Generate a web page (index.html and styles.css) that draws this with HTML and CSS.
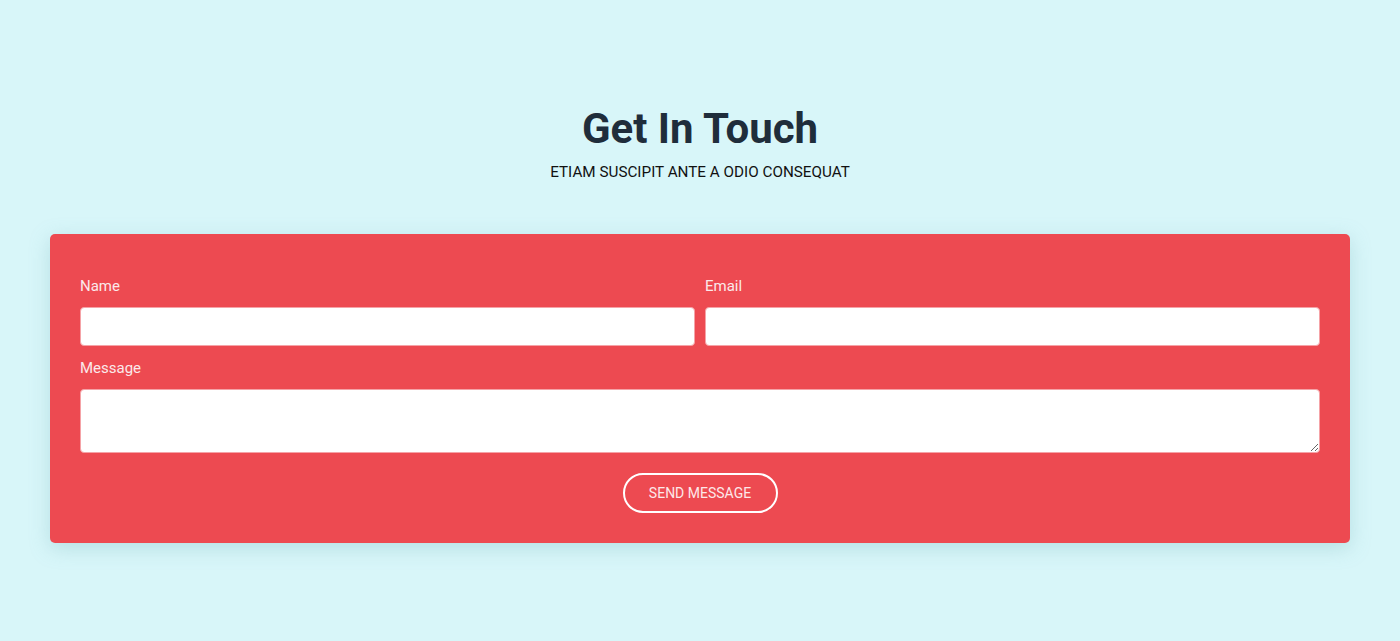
FILE: index.html
```html
<!DOCTYPE html>
<html lang="en">
<head>
<meta charset="utf-8">
<title>Get In Touch</title>
<link rel="stylesheet" href="styles.css">
</head>
<body>
<section class="contact">
  <header class="contact-head">
    <h1 class="title">Get In Touch</h1>
    <p class="subtitle">ETIAM SUSCIPIT ANTE A ODIO CONSEQUAT</p>
  </header>
  <form class="card">
    <div class="row">
      <div class="field">
        <label class="label" for="name">Name</label>
        <input class="input" id="name" type="text">
      </div>
      <div class="field">
        <label class="label" for="email">Email</label>
        <input class="input" id="email" type="email">
      </div>
    </div>
    <div class="field">
      <label class="label" for="message">Message</label>
      <textarea class="input textarea" id="message"></textarea>
    </div>
    <div class="actions">
      <button class="btn" type="button">SEND MESSAGE</button>
    </div>
  </form>
</section>
</body>
</html>
```

FILE: styles.css
```css
* { box-sizing: border-box; }
html, body { margin: 0; padding: 0; }
body {
  background: #d8f6f9;
  font-family: Roboto, "Liberation Sans", Arial, sans-serif;
  min-height: 641px;
}
.contact {
  padding: 103px 50px 0;
}
.contact-head {
  text-align: center;
  margin-bottom: 53px;
}
.title {
  margin: 0;
  font-size: 42px;
  line-height: 52px;
  font-weight: 700;
  color: #1f2d3b;
}
.subtitle {
  margin: 8px 0 0;
  font-size: 15.25px;
  line-height: 18px;
  color: #111;
}
.card {
  background: #ed4a51;
  border-radius: 5px;
  padding: 43px 30px 30px;
  box-shadow: 0 5px 20px rgba(120, 180, 190, 0.35);
  display: flex;
  flex-direction: column;
  gap: 13px;
}
.row {
  display: flex;
  gap: 10px;
}
.row .field { flex: 1; }
.field {
  display: flex;
  flex-direction: column;
  gap: 12px;
}
.label {
  font-size: 15px;
  line-height: 18px;
  color: #fbe9ea;
}
.input {
  height: 39px;
  border: 1px solid #f5a3a7;
  border-radius: 4px;
  background: #fff;
  font: inherit;
  display: block;
  width: 100%;
}
.textarea {
  height: 64px;
  resize: vertical;
}
.actions {
  display: flex;
  justify-content: center;
  padding-top: 7px;
}
.btn {
  width: 155px;
  height: 40px;
  border: 2px solid #fff;
  border-radius: 20px;
  background: transparent;
  color: #fde8e9;
  font-family: Roboto, "Liberation Sans", Arial, sans-serif;
  font-size: 14px;
  cursor: pointer;
}
```
